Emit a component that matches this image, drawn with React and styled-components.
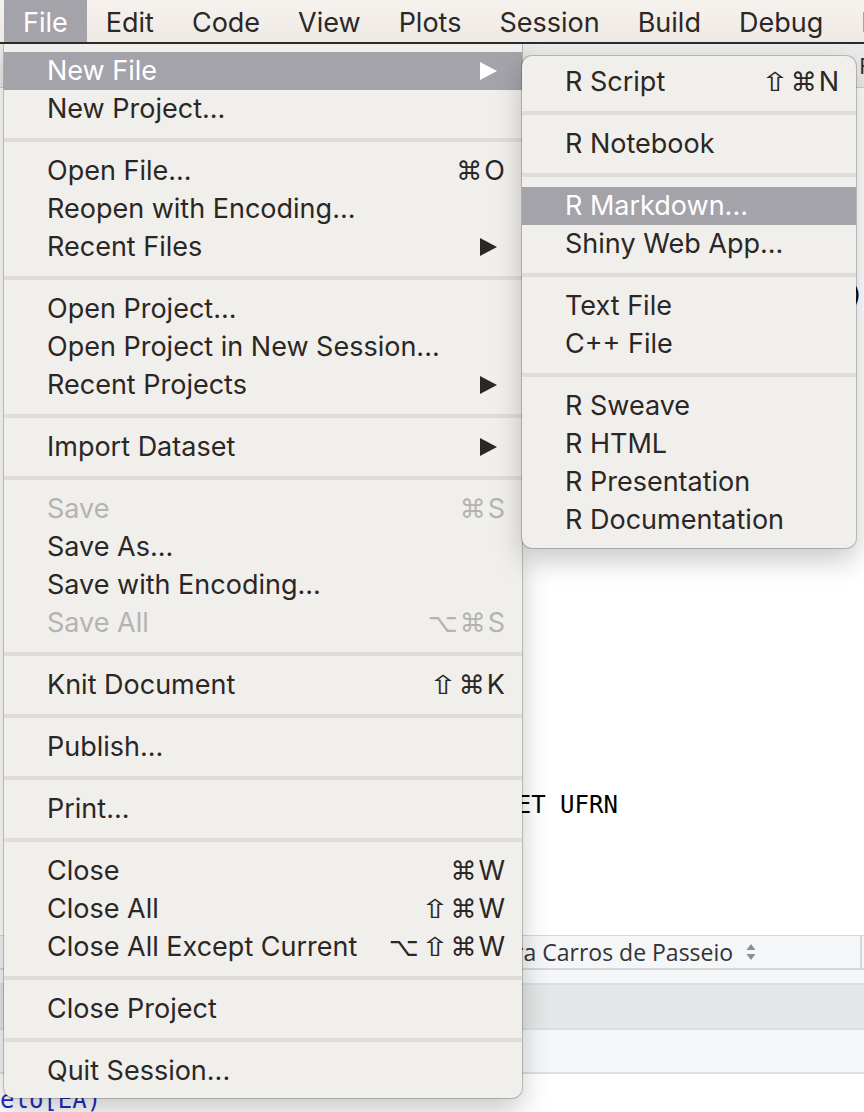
import styled, { createGlobalStyle } from "styled-components";

const GlobalStyle = createGlobalStyle`
  html, body {
    margin: 0;
    padding: 0;
    background: #ffffff;
  }
  * {
    box-sizing: border-box;
  }
`;

const MENU_FONT = `"Inter", "Noto Sans", "DejaVu Sans", sans-serif`;
const GLYPH_FONT = `"DejaVu Sans", "Noto Sans", sans-serif`;
const MONO_FONT = `"DejaVu Sans Mono", "Liberation Mono", monospace`;

const barItems = ["File", "Edit", "Code", "View", "Plots", "Session", "Build", "Debug", "Profile"];

const fileMenu = [
  { label: "New File", arrow: true, active: true },
  { label: "New Project..." },
  "sep",
  { label: "Open File...", keys: "⌘O" },
  { label: "Reopen with Encoding..." },
  { label: "Recent Files", arrow: true },
  "sep",
  { label: "Open Project..." },
  { label: "Open Project in New Session..." },
  { label: "Recent Projects", arrow: true },
  "sep",
  { label: "Import Dataset", arrow: true },
  "sep",
  { label: "Save", keys: "⌘S", disabled: true },
  { label: "Save As..." },
  { label: "Save with Encoding..." },
  { label: "Save All", keys: "⌥⌘S", disabled: true },
  "sep",
  { label: "Knit Document", keys: "⇧⌘K" },
  "sep",
  { label: "Publish..." },
  "sep",
  { label: "Print..." },
  "sep",
  { label: "Close", keys: "⌘W" },
  { label: "Close All", keys: "⇧⌘W" },
  { label: "Close All Except Current", keys: "⌥⇧⌘W" },
  "sep",
  { label: "Close Project" },
  "sep",
  { label: "Quit Session..." },
];

const newFileMenu = [
  { label: "R Script", keys: "⇧⌘N" },
  "sep",
  { label: "R Notebook" },
  "sep",
  { label: "R Markdown...", active: true },
  { label: "Shiny Web App..." },
  "sep",
  { label: "Text File" },
  { label: "C++ File" },
  "sep",
  { label: "R Sweave" },
  { label: "R HTML" },
  { label: "R Presentation" },
  { label: "R Documentation" },
];

const codeLines = [
  "",
  "",
  "",
  "",
  "",
  "",
  "   dados <- read.csv(\"vendas_veiculos_2017.csv\", sep = \";\")",
  "",
  "",
  "",
  "",
  "",
  "",
  "",
  "",
  "",
  "",
  "",
  "",
  "",
  "",
  "",
  "",
  "# Departamento de Estatística -- CCET UFRN",
];

function Shortcut({ keys }) {
  return (
    <Keys>
      {keys.split("").map((k, i) => (
        <Key key={i} $letter={/[A-Z]/.test(k)} $shift={k === "⇧"}>
          {k}
        </Key>
      ))}
    </Keys>
  );
}

function Menu({ items, ...rest }) {
  return (
    <MenuPanel {...rest}>
      {items.map((item, i) =>
        item === "sep" ? (
          <Separator key={i} />
        ) : (
          <Item key={i} $active={item.active} $disabled={item.disabled}>
            <Label>{item.label}</Label>
            {item.keys && <Shortcut keys={item.keys} />}
            {item.arrow && (
              <Arrow viewBox="0 0 17 18">
                <polygon points="0,0 17,9 0,18" fill="currentColor" />
              </Arrow>
            )}
          </Item>
        )
      )}
    </MenuPanel>
  );
}

export default function App() {
  return (
    <>
      <GlobalStyle />
      <Screen>
        <MenuBar>
          {barItems.map((name) => (
            <BarItem key={name} $active={name === "File"}>
              {name}
            </BarItem>
          ))}
        </MenuBar>
        <Desktop>
          <AppWindow>
            <Toolbar>
              <ToolText>Source on Save</ToolText>
              <ToolText>Run</ToolText>
              <ToolText>Source</ToolText>
              <ToolSpacer />
              <ToolText>Find</ToolText>
            </Toolbar>
            <Editor>
              {codeLines.map((line, i) => (
                <CodeLine key={i}>{line || " "}</CodeLine>
              ))}
            </Editor>
            <DataPane>
              <HeaderRow>
                <HeaderCell>Índice de Preços para Carros de Passeio</HeaderCell>
                <SortIcon viewBox="0 0 12 22">
                  <polygon points="6,3 10.5,9 1.5,9" fill="#8a8d90" />
                  <polygon points="6,19 10.5,13 1.5,13" fill="#8a8d90" />
                </SortIcon>
                <HeaderCell $grow />
              </HeaderRow>
              <Band $tone="light" $h={15} />
              <Band $tone="gray" $h={45} />
              <Band $tone="light" $h={44} />
            </DataPane>
            <Console>
              <ConsoleLine>elo[EA)</ConsoleLine>
            </Console>
          </AppWindow>
          <Menu items={fileMenu} $left={4} $top={0} $width={518} $attached />
          <Menu items={newFileMenu} $left={522} $top={12} $width={334} />
        </Desktop>
      </Screen>
    </>
  );
}

const Screen = styled.div`
  width: 864px;
  height: 1112px;
  overflow: hidden;
  display: flex;
  flex-direction: column;
  background: #ffffff;
`;

const MenuBar = styled.div`
  height: 44px;
  flex-shrink: 0;
  display: flex;
  align-items: stretch;
  padding-left: 4px;
  background: linear-gradient(#f6f2ee, #efe9e4);
  border-bottom: 2px solid #2c2a29;
  font-family: ${MENU_FONT};
  font-size: 27px;
  white-space: nowrap;
`;

const BarItem = styled.div`
  display: flex;
  align-items: center;
  padding: 2px 19px 0;
  color: ${(p) => (p.$active ? "#ffffff" : "#2b2826")};
  background: ${(p) => (p.$active ? "#a4a3a9" : "transparent")};
`;

const Desktop = styled.div`
  position: relative;
  flex: 1;
  overflow: hidden;
`;

const AppWindow = styled.div`
  height: 100%;
  display: flex;
  flex-direction: column;
  background: #ffffff;
`;

const Toolbar = styled.div`
  height: 44px;
  flex-shrink: 0;
  display: flex;
  align-items: center;
  gap: 18px;
  padding: 0 0 0 12px;
  margin-right: -40px;
  background: #ebebeb;
  border-bottom: 1px solid #cfcfcf;
  font-family: ${MENU_FONT};
  font-size: 22px;
  color: #333;
  overflow: hidden;
  white-space: nowrap;
`;

const ToolText = styled.span``;

const ToolSpacer = styled.div`
  flex: 1;
`;

const Editor = styled.div`
  height: 847px;
  flex-shrink: 0;
  padding: 12px 0 0 11px;
  font-family: ${MONO_FONT};
  font-size: 24px;
  color: #000;
  overflow: hidden;
`;

const CodeLine = styled.div`
  height: 30px;
  line-height: 30px;
  white-space: pre;
`;

const DataPane = styled.div`
  flex-shrink: 0;
  display: flex;
  flex-direction: column;
  border-top: 1px solid #d5d8db;
`;

const HeaderRow = styled.div`
  height: 34px;
  display: flex;
  align-items: center;
  background: #f4f6f8;
  border-bottom: 2px solid #d5d8db;
  font-family: "Open Sans", "DejaVu Sans", sans-serif;
  font-size: 23px;
  color: #333;
  white-space: nowrap;
`;

const HeaderCell = styled.div`
  padding-left: ${(p) => (p.$grow ? "0" : "306px")};
  flex: ${(p) => (p.$grow ? 1 : "none")};
  align-self: stretch;
  display: flex;
  align-items: center;
  ${(p) => p.$grow && "border-right: 2px solid #d5d8db; margin-right: 2px;"}
`;

const SortIcon = styled.svg`
  width: 12px;
  height: 22px;
  margin: 0 0 0 12px;
`;

const Band = styled.div`
  height: ${(p) => p.$h}px;
  background: ${(p) => (p.$tone === "gray" ? "#e5e6e7" : "#f4f6f7")};
  border-bottom: 2px solid #dcdfe1;
`;

const Console = styled.div`
  flex: 1;
  padding-top: 12px;
  font-family: ${MONO_FONT};
  font-size: 24px;
  color: #1c2fc4;
`;

const ConsoleLine = styled.div`
  white-space: pre;
`;

const MenuPanel = styled.div`
  position: absolute;
  z-index: 10;
  left: ${(p) => p.$left}px;
  top: ${(p) => p.$top}px;
  width: ${(p) => p.$width}px;
  padding: ${(p) => (p.$attached ? "8px 0 8px" : "7px 0 9px")};
  background-color: #f1efec;
  border-radius: ${(p) => (p.$attached ? "0 0 10px 10px" : "10px")};
  box-shadow: 0 0 0 1px rgba(0, 0, 0, 0.2), 0 12px 28px rgba(0, 0, 0, 0.22);
  font-family: ${MENU_FONT};
  font-size: 27px;
  white-space: nowrap;
`;

const Item = styled.div`
  height: 38px;
  display: flex;
  align-items: center;
  padding: 0 17px 1px 43px;
  color: ${(p) => (p.$active ? "#ffffff" : p.$disabled ? "#b5b3b1" : "#2a2725")};
  background: ${(p) => (p.$active ? "#a4a3a9" : "transparent")};
`;

const Label = styled.span`
  flex: 1;
`;

const Keys = styled.span`
  display: flex;
  align-items: center;
  gap: 2px;
`;

const Key = styled.span`
  display: inline-block;
  font-family: ${(p) => (p.$letter ? MENU_FONT : GLYPH_FONT)};
  font-size: ${(p) => (p.$letter ? "27px" : "26px")};
  ${(p) => p.$shift && "transform: scaleX(1.35); margin: 0 3px;"}
`;

const Arrow = styled.svg`
  width: 17px;
  height: 18px;
  margin-right: 8px;
  color: inherit;
`;

const Separator = styled.div`
  height: 24px;
  display: flex;
  align-items: center;
  &::before {
    content: "";
    flex: 1;
    height: 4px;
    background: #dfdcd9;
  }
`;
